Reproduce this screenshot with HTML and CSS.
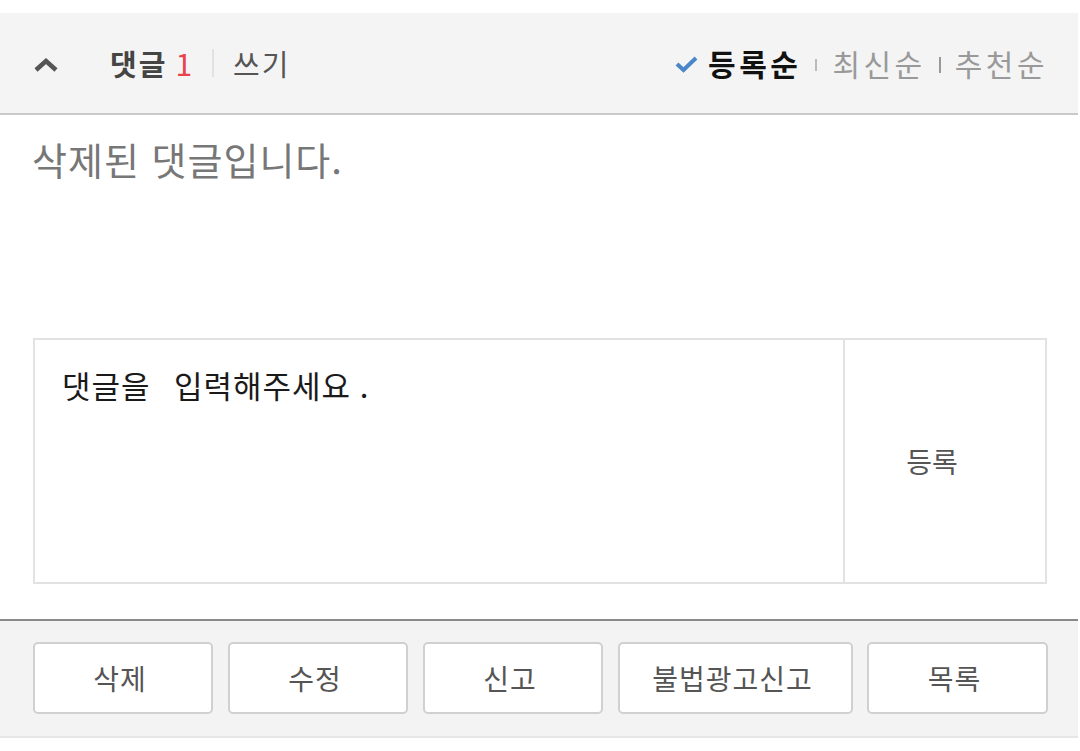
FILE: index.html
```html
<!DOCTYPE html>
<html lang="ko">
<head>
<meta charset="utf-8">
<link rel="stylesheet" href="styles.css">
</head>
<body>
<div class="page">
  <div class="cmt-head">
    <div class="head-left">
      <svg class="chev" width="24" height="14" viewBox="0 0 24 14"><path d="M2 12 L12 3 L22 12" fill="none" stroke="#555" stroke-width="4.5"/></svg>
      <span class="title">댓글</span><span class="count">1</span><span class="sep-light"></span><span class="write">쓰기</span>
    </div>
    <div class="head-right">
      <svg class="check" width="25" height="18" viewBox="0 0 25 18"><path d="M3 9 L9.5 15 L22 3" fill="none" stroke="#4a86c8" stroke-width="4"/></svg>
      <span class="sort active">등록순</span><span class="sep"></span><span class="sort">최신순</span><span class="sep dark"></span><span class="sort">추천순</span>
    </div>
  </div>
  <div class="deleted">삭제된 댓글입니다.</div>
  <div class="write-box">
    <textarea class="input" placeholder="댓글을  입력해주세요&#8197;."></textarea>
    <div class="submit">등록</div>
  </div>
  <div class="actions">
    <div class="btn w1">삭제</div>
    <div class="btn w1">수정</div>
    <div class="btn w1">신고</div>
    <div class="btn w2">불법광고신고</div>
    <div class="btn w3">목록</div>
  </div>
</div>
</body>
</html>
```

FILE: styles.css
```css
html, body {
  margin: 0;
  padding: 0;
  background: #fff;
}
body {
  font-family: "Noto Sans CJK KR", "Noto Sans", sans-serif;
}
.page {
  width: 1078px;
  padding-top: 13px;
}
.cmt-head {
  height: 100px;
  background: #f4f4f4;
  border-bottom: 2px solid #c9c9c9;
  display: flex;
  align-items: center;
  justify-content: space-between;
  padding: 0 30px 0 34px;
}
.head-left, .head-right {
  display: flex;
  align-items: center;
}
.chev {
  margin-right: 52px;
  margin-top: 4px;
}
.title {
  font-size: 29px;
  font-weight: 700;
  color: #444;
  letter-spacing: 2px;
}
.count {
  font-size: 30px;
  color: #e8434a;
  margin-left: 8px;
}
.sep-light {
  width: 2px;
  height: 28px;
  background: #e2e2e2;
  margin: 0 19px 0 20px;
}
.write {
  font-size: 29px;
  color: #555;
  letter-spacing: 2px;
}
.check {
  margin-right: 9px;
  margin-top: 2px;
}
.sort {
  font-size: 30px;
  color: #999;
  letter-spacing: 3.5px;
}
.sort.active {
  color: #111;
  font-weight: 700;
}
.sep {
  width: 2px;
  height: 12px;
  background: #bbb;
  margin: 4px 15px 0 14px;
}
.sep.dark {
  height: 16px;
  background: #999;
  margin: 4px 14px 0 13px;
}
.deleted {
  font-size: 38px;
  letter-spacing: 1px;
  color: #777;
  padding: 18px 0 0 32px;
  height: 223px;
  line-height: 52px;
  box-sizing: border-box;
}
.write-box {
  margin-left: 33px;
  width: 1014px;
  height: 246px;
  border: 2px solid #e2e2e2;
  box-sizing: border-box;
  display: flex;
}
.input {
  flex: 1;
  border: none;
  border-right: 2px solid #e2e2e2;
  resize: none;
  outline: none;
  padding: 24px 27px;
  font-family: "Noto Sans CJK KR", sans-serif;
  font-size: 31px;
  letter-spacing: 1px;
  word-spacing: 2px;
  line-height: 42px;
  margin: 0;
  background: #fff;
}
.input::placeholder {
  color: #1a1a1a;
  opacity: 1;
}
.submit {
  width: 200px;
  box-sizing: border-box;
  padding-right: 26px;
  display: flex;
  align-items: center;
  justify-content: center;
  font-size: 28px;
  color: #555;
}
.actions {
  margin-top: 35px;
  border-top: 2px solid #8a8a8a;
  border-bottom: 2px solid #e6e6e6;
  background: #f3f3f3;
  height: 94px;
  display: flex;
  align-items: flex-start;
  gap: 15px;
  padding: 21px 0 0 33px;
}
.btn {
  height: 72px;
  border: 2px solid #d0d0d0;
  border-radius: 5px;
  background: #fff;
  box-sizing: border-box;
  padding-right: 6px;
  display: flex;
  align-items: center;
  justify-content: center;
  font-size: 28px;
  letter-spacing: 1px;
  color: #555;
}
.w1 { width: 180px; }
.w2 { width: 235px; }
.w3 { width: 181px; margin-left: -1px; }
```
